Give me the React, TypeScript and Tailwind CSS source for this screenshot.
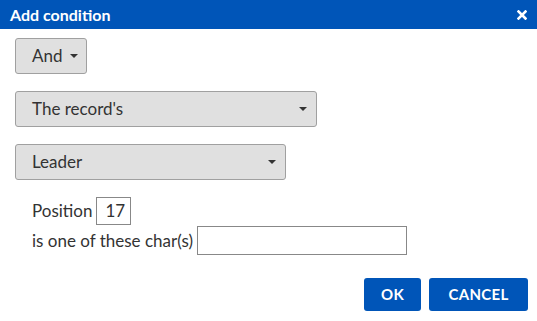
import React from "react";

function Caret() {
  return <span className="inline-block w-0 h-0 border-l-[4px] border-r-[4px] border-t-[4px] border-l-transparent border-r-transparent border-t-[#333]" />;
}

export default function App() {
  return (
    <div className="w-[537px] h-[321px] bg-white flex flex-col text-[#333]" style={{ fontFamily: "Lato, 'Open Sans', sans-serif" }}>
      <div className="h-[29px] bg-[#0055b8] flex items-center justify-between pl-[10px] pr-[10px]">
        <span className="text-white font-bold text-[16px] leading-none">Add condition</span>
        <svg width="10" height="10" viewBox="0 0 10 10">
          <path d="M1.5 1.5 L8.5 8.5 M8.5 1.5 L1.5 8.5" stroke="white" strokeWidth="2.6" strokeLinecap="square" />
        </svg>
      </div>
      <div className="flex flex-col pl-[15px] pt-[9px]">
        <button className="w-[72px] h-[36px] bg-[#e0e0e0] border border-[#a0a0a0] rounded-[3px] flex items-center pl-[16px] gap-[8px] text-[17px]">
          <span>And</span>
          <Caret />
        </button>
        <button className="mt-[17px] w-[302px] h-[36px] bg-[#e0e0e0] border border-[#a0a0a0] rounded-[3px] flex items-center justify-between pl-[16px] pr-[9px] text-[17px]">
          <span>The record's</span>
          <Caret />
        </button>
        <button className="mt-[17px] w-[271px] h-[36px] bg-[#e0e0e0] border border-[#a0a0a0] rounded-[3px] flex items-center justify-between pl-[16px] pr-[9px] text-[17px]">
          <span>Leader</span>
          <Caret />
        </button>
        <div className="mt-[17px] pl-[17px] flex flex-col text-[17px]">
          <div className="flex items-center gap-[4px]">
            <span>Position</span>
            <div className="w-[35px] h-[28px] border border-[#888] flex items-center pl-[8px]">17</div>
          </div>
          <div className="flex items-center gap-[4px] mt-[1px]">
            <span>is one of these char(s)</span>
            <div className="w-[210px] h-[29px] border border-[#888]" />
          </div>
        </div>
      </div>
      <div className="flex justify-end gap-[8px] pr-[9px] mt-[23px]">
        <button className="w-[57px] h-[33px] bg-[#0055b8] rounded-[3px] text-white font-bold text-[15px] tracking-[0.3px]">OK</button>
        <button className="w-[99px] h-[33px] bg-[#0055b8] rounded-[3px] text-white font-bold text-[15px] tracking-[0.3px]">CANCEL</button>
      </div>
    </div>
  );
}
